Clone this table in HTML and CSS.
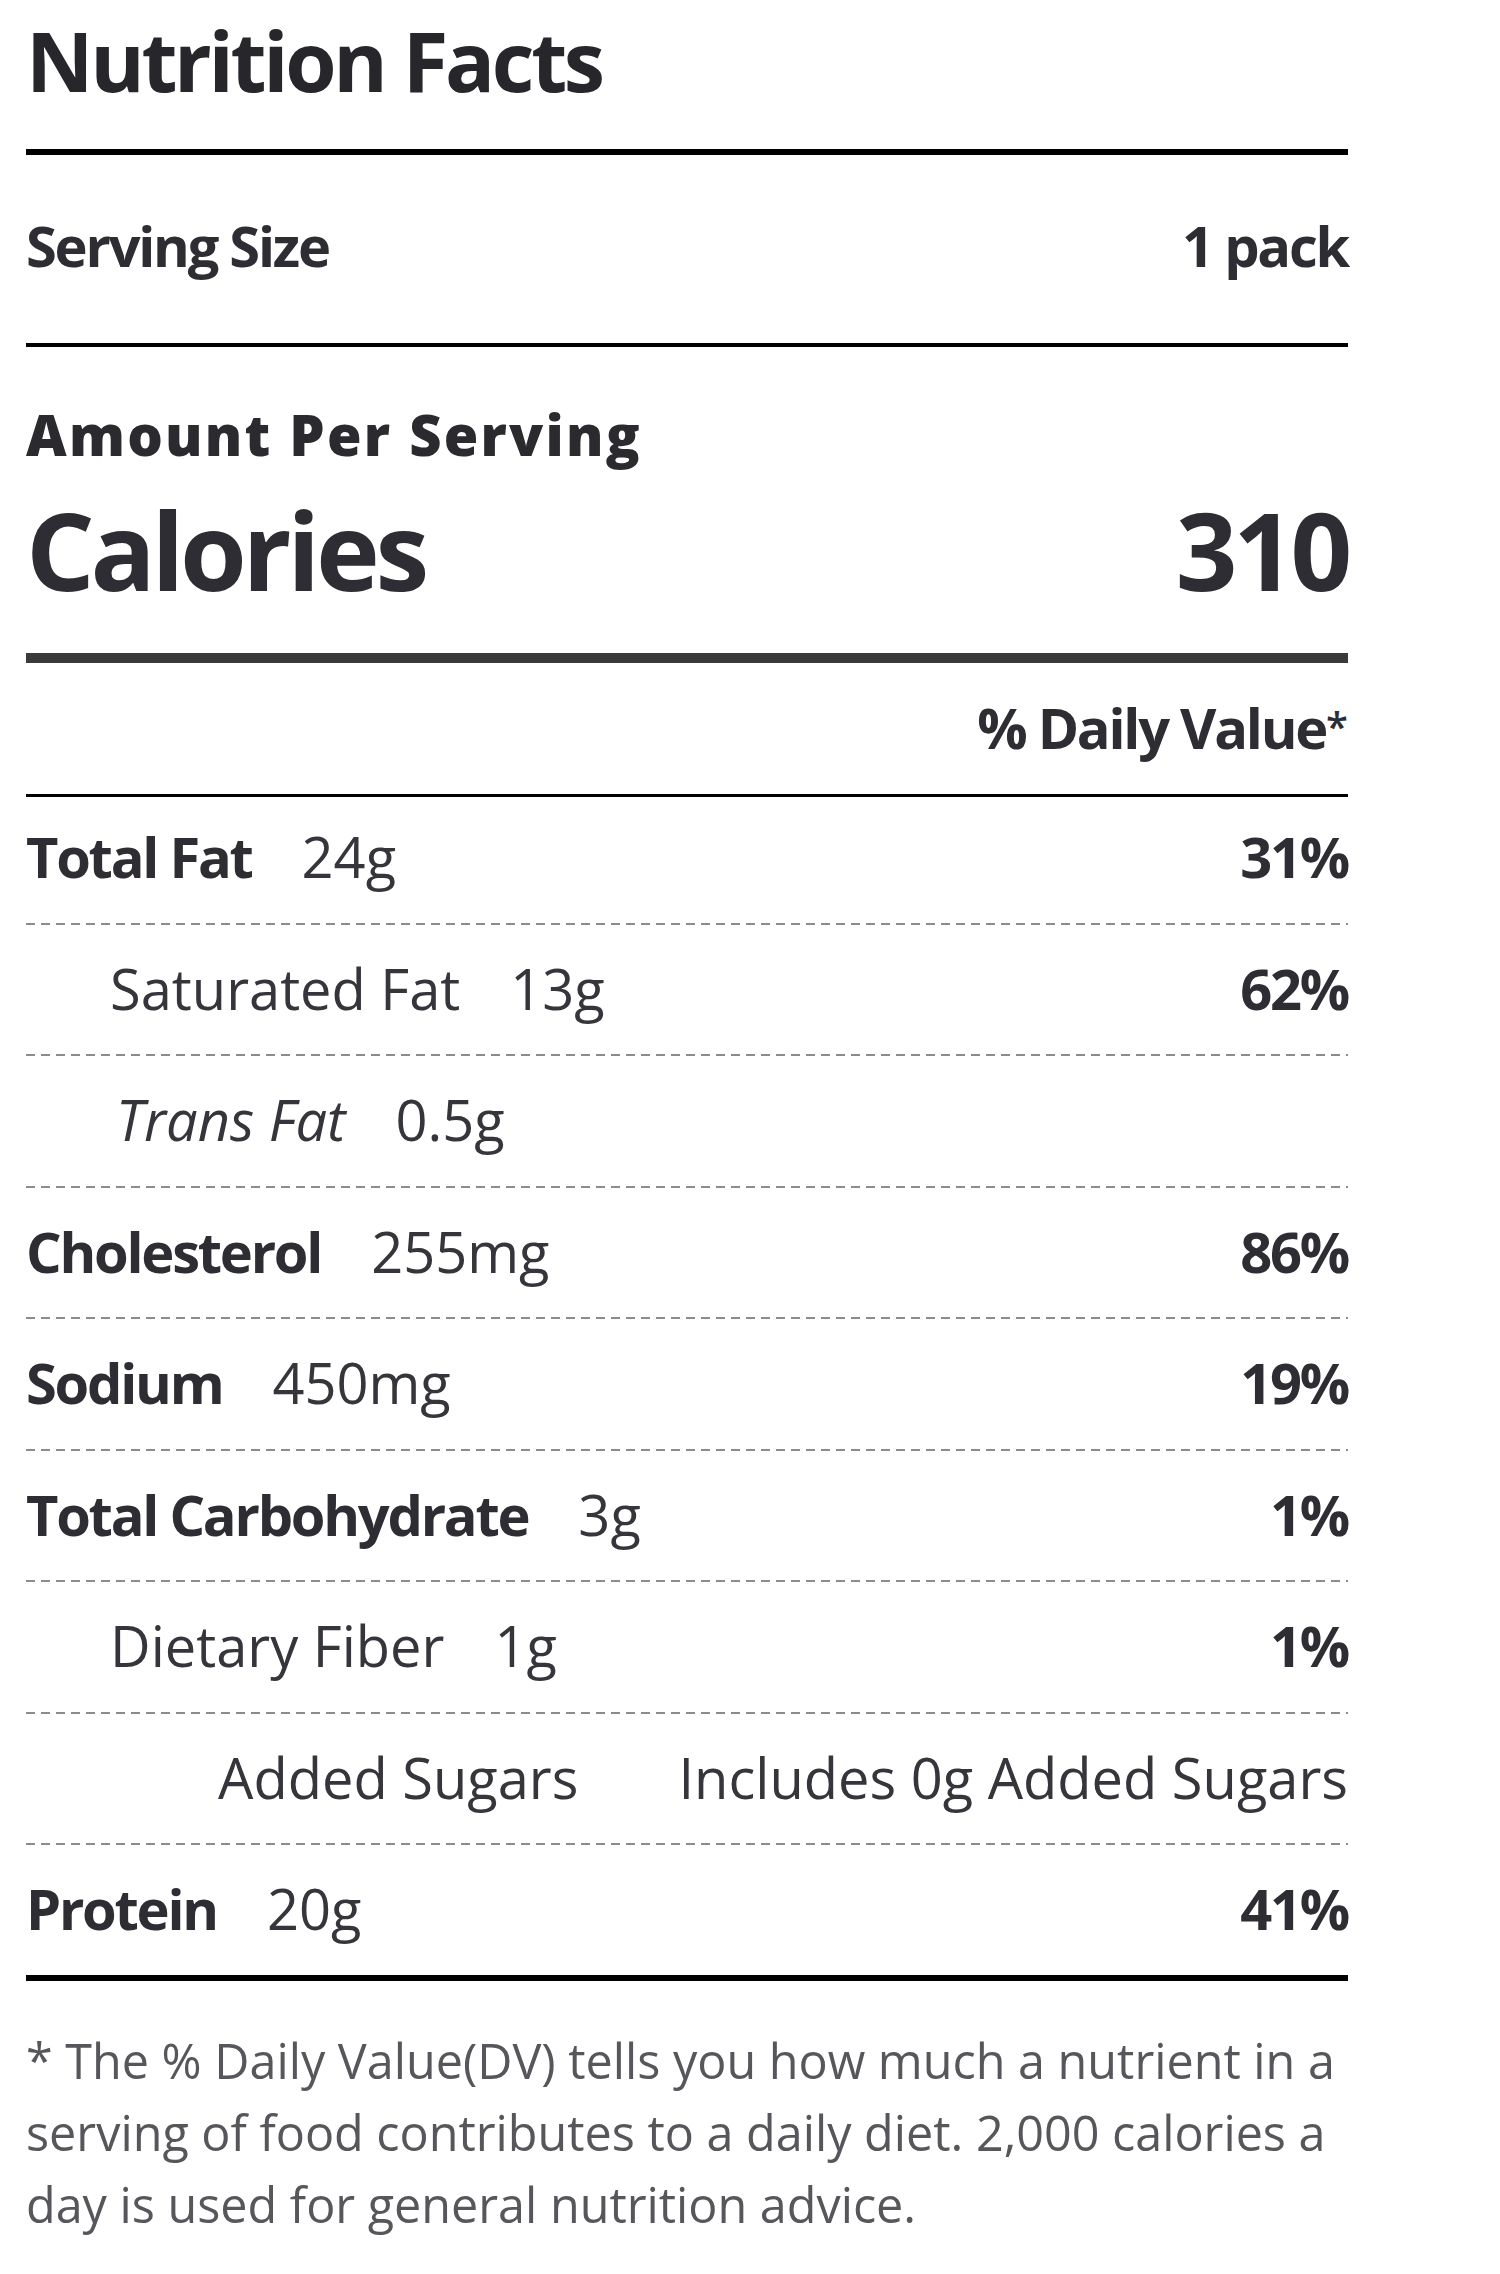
FILE: index.html
```html
<!DOCTYPE html>
<html lang="en">
<head>
<meta charset="utf-8">
<title>Nutrition Facts</title>
<link rel="stylesheet" href="styles.css">
</head>
<body>
<div class="label">
  <h1 class="title">Nutrition Facts</h1>
  <div class="rule rule-top"></div>
  <div class="serving">
    <span class="b">Serving Size</span>
    <span class="b">1 pack</span>
  </div>
  <div class="rule rule-mid"></div>
  <div class="amount">Amount Per Serving</div>
  <div class="calories">
    <span>Calories</span>
    <span>310</span>
  </div>
  <div class="rule rule-thick"></div>
  <div class="dv b">% Daily Value<span class="star">*</span></div>
  <div class="rule rule-thin"></div>
  <div class="rows">
    <div class="row first">
      <span class="name"><span class="b">Total Fat</span><span class="amt">24g</span></span>
      <span class="b">31%</span>
    </div>
    <div class="row sub">
      <span class="name"><span>Saturated Fat</span><span class="amt">13g</span></span>
      <span class="b">62%</span>
    </div>
    <div class="row sub trans">
      <span class="name"><span class="i">Trans Fat</span><span class="amt">0.5g</span></span>
      <span></span>
    </div>
    <div class="row">
      <span class="name"><span class="b">Cholesterol</span><span class="amt">255mg</span></span>
      <span class="b">86%</span>
    </div>
    <div class="row">
      <span class="name"><span class="b">Sodium</span><span class="amt">450mg</span></span>
      <span class="b">19%</span>
    </div>
    <div class="row">
      <span class="name"><span class="b">Total Carbohydrate</span><span class="amt">3g</span></span>
      <span class="b">1%</span>
    </div>
    <div class="row sub">
      <span class="name"><span>Dietary Fiber</span><span class="amt">1g</span></span>
      <span class="b">1%</span>
    </div>
    <div class="row added">
      <span class="name"><span>Added Sugars</span></span>
      <span>Includes 0g Added Sugars</span>
    </div>
    <div class="row last">
      <span class="name"><span class="b">Protein</span><span class="amt">20g</span></span>
      <span class="b">41%</span>
    </div>
  </div>
  <div class="rule rule-bottom"></div>
  <p class="note">* The % Daily Value(DV) tells you how much a nutrient in a serving of food contributes to a daily diet. 2,000 calories a day is used for general nutrition advice.</p>
</div>
</body>
</html>
```

FILE: styles.css
```css
html, body {
  margin: 0;
  padding: 0;
  background: #ffffff;
}

body {
  font-family: "Open Sans", "Noto Sans", sans-serif;
  color: #35353b;
}

.label {
  width: 1322px;
  margin-left: 26px;
  padding-top: 18px;
}

.b {
  font-weight: 700;
  letter-spacing: -0.04em;
  color: #2d2d33;
}

.i {
  font-style: italic;
}

.title {
  margin: 0;
  font-size: 83px;
  line-height: 83px;
  font-weight: 700;
  letter-spacing: -0.04em;
  color: #26262b;
}

.rule {
  background: #000;
}

.rule-top {
  height: 6px;
  margin-top: 48px;
}

.rule-bottom {
  height: 6px;
}

.rule-mid {
  height: 4px;
}

.rule-thick {
  height: 10px;
  background: #3a3a3a;
}

.rule-thin {
  height: 3px;
  margin-top: 39px;
}

.serving {
  display: flex;
  justify-content: space-between;
  font-size: 56px;
  line-height: 56px;
  padding: 62px 0 70px;
}

.amount {
  font-size: 56px;
  line-height: 56px;
  font-weight: 800;
  letter-spacing: 0.04em;
  color: #2a2a2f;
  margin-top: 59px;
}

.calories {
  display: flex;
  justify-content: space-between;
  font-size: 108px;
  line-height: 108px;
  font-weight: 700;
  letter-spacing: -0.04em;
  color: #2d2d33;
  margin-top: 34px;
  margin-bottom: 49px;
}

.dv {
  font-size: 56px;
  line-height: 56px;
  text-align: right;
  margin-top: 35px;
}

.star {
  font-size: 40px;
  vertical-align: 8px;
  font-weight: 600;
  letter-spacing: 0;
}

.rows {
  font-size: 56px;
  line-height: 56px;
}

.row {
  display: flex;
  justify-content: space-between;
  padding: 35px 0 40.5px;
  background-image: repeating-linear-gradient(to right, #8c8c8c 0 9px, transparent 9px 15px);
  background-size: 100% 2px;
  background-position: left bottom;
  background-repeat: no-repeat;
}

.row.first {
  padding-top: 31px;
}

.row.last {
  background-image: none;
  padding-bottom: 39px;
}

.name {
  display: flex;
}

.amt {
  margin-left: 50px;
}

.sub .name {
  padding-left: 84px;
}

.trans .name {
  padding-left: 90px;
}

.added .name {
  padding-left: 192px;
}

.note {
  margin: 43px 0 0;
  font-size: 48.5px;
  line-height: 72px;
  color: #56565b;
}
```
